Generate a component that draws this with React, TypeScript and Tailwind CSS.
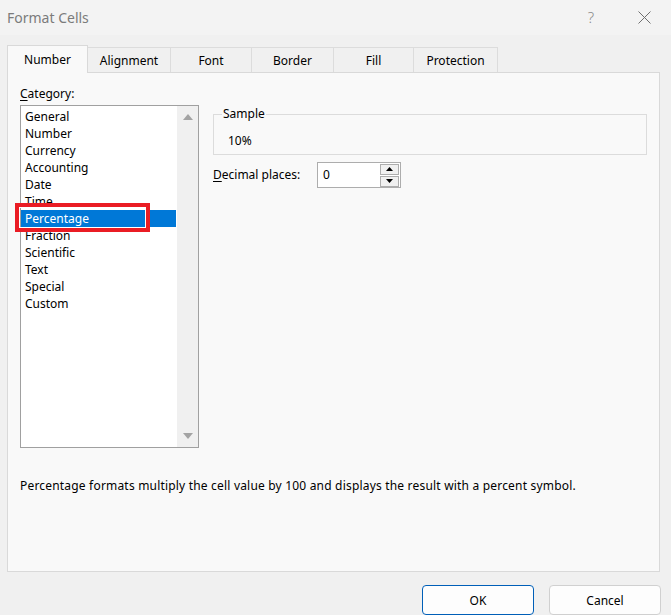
const categories = [
  'General',
  'Number',
  'Currency',
  'Accounting',
  'Date',
  'Time',
  'Percentage',
  'Fraction',
  'Scientific',
  'Text',
  'Special',
  'Custom',
];

const tabs = ['Number', 'Alignment', 'Font', 'Border', 'Fill', 'Protection'];
const tabWidths = ['w-[81px]', 'w-[83px]', 'w-[81px]', 'w-[82px]', 'w-[80px]', 'w-[84px]'];

function TitleBar() {
  return (
    <div className="h-[35px] bg-[#f3f3f3] flex items-center pl-[7px] pr-[20px]">
      <span className="text-[14px] text-[#7b7b7b]">Format Cells</span>
      <div className="ml-auto flex items-center gap-[44px] text-[#8a8a8a]">
        <span className="text-[15px] font-light">?</span>
        <svg width="13" height="13" viewBox="0 0 13 13" className="text-[#6f6f6f]">
          <path d="M0.5 0.5 L12.5 12.5 M12.5 0.5 L0.5 12.5" stroke="currentColor" strokeWidth="1" fill="none" />
        </svg>
      </div>
    </div>
  );
}

function Tabs() {
  return (
    <div className="flex items-end pl-[7px] pt-[9px] h-[37px]">
      {tabs.map((t, i) =>
        i === 0 ? (
          <div
            key={t}
            className={`${tabWidths[i]} h-[28px] bg-[#f9f9f9] border border-b-0 border-[#d9d9d9] flex items-center justify-center relative z-10 -mb-px`}
          >
            {t}
          </div>
        ) : (
          <div
            key={t}
            className={`${tabWidths[i]} h-[25px] bg-[#f0f0f0] border border-b-0 border-l-0 border-[#dcdcdc] flex items-center justify-center pt-px`}
          >
            {t}
          </div>
        )
      )}
    </div>
  );
}

function CategoryList() {
  return (
    <div className="w-[179px]">
      <div className="h-[16px] leading-[16px] mb-[3px]">
        <span className="underline underline-offset-2">C</span>ategory:
      </div>
      <div className="relative h-[343px] border border-[#a0a0a0] bg-white flex">
        <ul className="flex-1 pt-[2px] pl-0">
          {categories.map((c) => (
            <li
              key={c}
              className={`h-[17px] leading-[17px] pl-[4px] ${
                c === 'Percentage' ? 'bg-[#0078d7] text-white' : 'text-[#000]'
              }`}
            >
              {c}
            </li>
          ))}
        </ul>
        <div className="w-[21px] ml-px bg-[#f0f0f0] flex flex-col items-center justify-between py-[8px]">
          <svg width="10" height="6" viewBox="0 0 10 6">
            <path d="M5 0 L10 6 L0 6 Z" fill="#a3a3a3" />
          </svg>
          <svg width="10" height="6" viewBox="0 0 10 6">
            <path d="M0 0 L10 0 L5 6 Z" fill="#a3a3a3" />
          </svg>
        </div>
        <div className="absolute left-[-6px] top-[97px] w-[135px] h-[29px] border-[4px] border-[#ea1c24] shadow-[inset_0_0_0_1px_#ffffff]" />
      </div>
    </div>
  );
}

function Spinner() {
  return (
    <div className="w-[84px] h-[26px] border border-[#adadad] bg-white flex items-center pl-[5px] pr-[1px]">
      <span className="flex-1">0</span>
      <div className="flex flex-col gap-px">
        <div className="w-[19px] h-[11px] border border-[#adadad] bg-[#f0f0f0] flex items-center justify-center">
          <svg width="7" height="4" viewBox="0 0 7 4">
            <path d="M3.5 0 L7 4 L0 4 Z" fill="#000" />
          </svg>
        </div>
        <div className="w-[19px] h-[11px] border border-[#adadad] bg-[#f0f0f0] flex items-center justify-center">
          <svg width="7" height="4" viewBox="0 0 7 4">
            <path d="M0 0 L7 0 L3.5 4 Z" fill="#000" />
          </svg>
        </div>
      </div>
    </div>
  );
}

export default function App() {
  return (
    <div
      className="w-[671px] h-[615px] bg-[#f0f0f0] overflow-hidden text-[12px] text-black"
      style={{ fontFamily: '"Noto Sans", "Open Sans", sans-serif' }}
    >
      <TitleBar />
      <Tabs />
      <div className="ml-[7px] w-[653px] h-[500px] border border-[#d9d9d9] bg-[#f9f9f9] pl-[12px] pt-[13px]">
        <div className="flex gap-[14px]">
          <CategoryList />
          <div className="w-[434px] pt-[20px]">
            <fieldset className="border border-[#dcdcdc] h-[49px] px-[8px] pb-[4px]">
              <legend className="px-px leading-[16px]">Sample</legend>
              <div className="pt-[11px] pl-[6px] leading-[16px]">10%</div>
            </fieldset>
            <div className="flex items-center mt-[6px] pt-px">
              <span className="w-[104px]">
                <span className="underline underline-offset-2">D</span>ecimal places:
              </span>
              <Spinner />
            </div>
          </div>
        </div>
        <p className="mt-[30px] leading-[16px] tracking-[0.19px]">
          Percentage formats multiply the cell value by 100 and displays the result with a percent symbol.
        </p>
      </div>
      <div className="flex justify-end gap-[15px] pr-[10px] pt-[13px]">
        <button className="w-[112px] h-[30px] rounded-[4px] border border-[#005fb8] bg-[#fdfdfd] pt-px">OK</button>
        <button className="w-[112px] h-[30px] rounded-[4px] border border-[#d0d0d0] bg-[#fdfdfd] pt-px">Cancel</button>
      </div>
    </div>
  );
}
